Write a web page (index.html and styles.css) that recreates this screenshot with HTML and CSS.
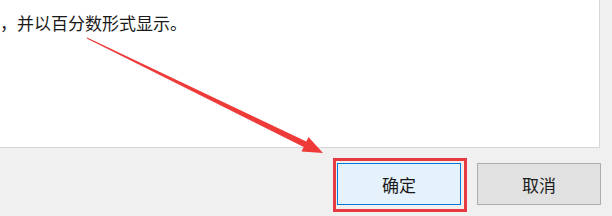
FILE: index.html
```html
<!DOCTYPE html>
<html lang="zh-CN">
<head>
  <meta charset="UTF-8">
  <meta name="viewport" content="width=device-width, initial-scale=1.0">
  <title>确定</title>
  <link rel="stylesheet" href="styles.css">
</head>
<body>
  <div class="dialog">
    <div class="content">
      <p class="message">，并以百分数形式显示。</p>
    </div>
    <div class="actions">
      <button class="button primary">确定<span class="highlight"></span></button>
      <button class="button">取消</button>
    </div>
    <!-- annotation arrow -->
    <svg class="arrow" width="612" height="216" viewBox="0 0 612 216">
      <polygon points="86.8,38.45 303.7,146.9 301.5,151.4 323,153 308.5,137 306.3,141.5 87.2,37.55" fill="#ef3a3a"/>
    </svg>
  </div>
</body>
</html>
```

FILE: styles.css
```css
body {
  margin: 0;
  background-color: #f0f0f0;
  font-family: "Noto Sans CJK SC", "Noto Sans", sans-serif;
  color: #1a1a1a;
}
.dialog {
  position: relative;
  width: 612px;
  height: 216px;
  overflow: hidden;
}
.content {
  width: 599px;
  height: 147px;
  background-color: #ffffff;
  border-right: 1px solid #d6d6d6;
  border-bottom: 1px solid #d6d6d6;
}
.message {
  margin: 0;
  padding-top: 11px;
  font-size: 17px;
  line-height: 24px;
}
.actions {
  display: flex;
  justify-content: flex-end;
  gap: 16px;
  padding: 15px 11px 0 0;
}
.button {
  position: relative;
  width: 124px;
  height: 42px;
  padding: 0;
  font-family: inherit;
  font-size: 17px;
  color: #1a1a1a;
  background-color: #e1e1e1;
  border: 1px solid #adadad;
}
.button.primary {
  background-color: #e5f1fb;
  border-color: #0078d7;
}
.highlight {
  position: absolute;
  left: -5px;
  top: -6px;
  width: 134px;
  height: 54px;
  box-sizing: border-box;
  border: 3px solid #e8393f;
}
.arrow {
  position: absolute;
  left: 0;
  top: 0;
  pointer-events: none;
}
```
